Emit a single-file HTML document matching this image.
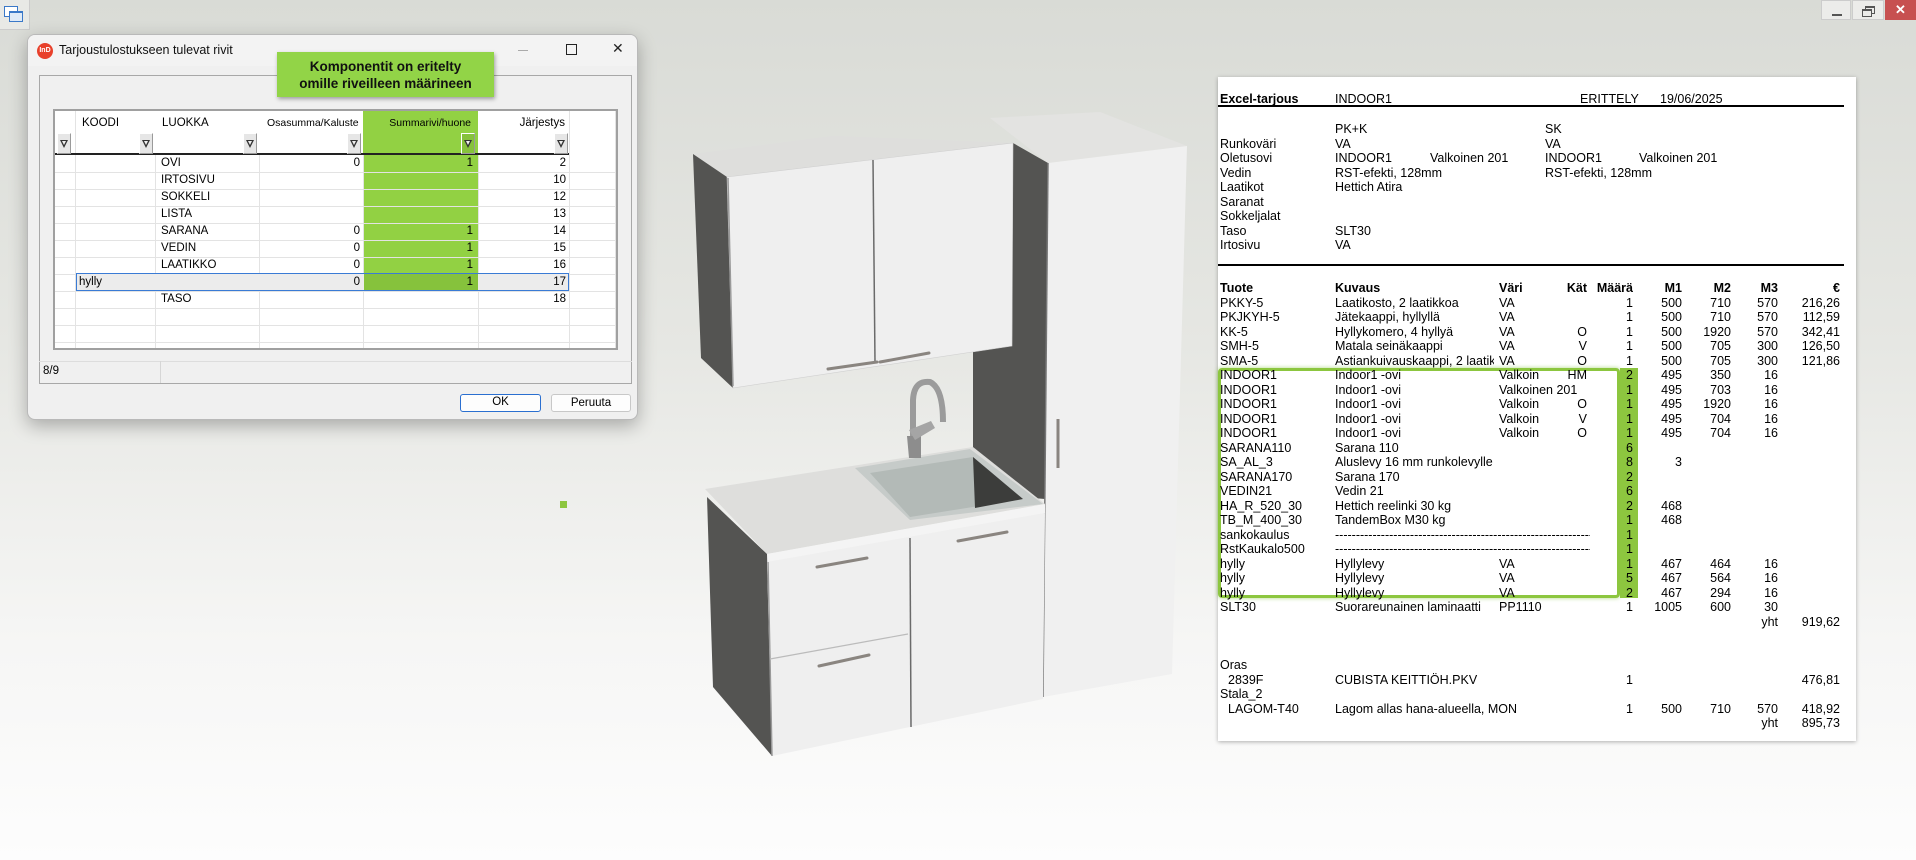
<!DOCTYPE html>
<html><head><meta charset="utf-8"><style>
*{margin:0;padding:0;box-sizing:border-box}
body{width:1916px;height:860px;overflow:hidden;position:relative;font-family:"Liberation Sans",sans-serif;background:linear-gradient(#d9dbd6 0%,#e6e7e3 40%,#f6f6f5 75%,#fdfdfd 100%)}
.abs{position:absolute}
#dlg{left:27px;top:34px;width:611px;height:386px;background:#f0f0f0;border:1px solid #b9b9b9;border-radius:8px;box-shadow:0 6px 18px rgba(0,0,0,.28);overflow:hidden}
#tb{left:0;top:0;width:611px;height:31px;background:#f3f3f3}
.grid{left:25px;top:74px;width:565px;height:241px;background:#fff;border:2px solid #a0a0a0;overflow:hidden;font-size:11.5px;color:#000}
.gl{position:absolute;background:#e3e3e3}
.cell{position:absolute;height:17px;line-height:17px;white-space:nowrap}
.flt{position:absolute;width:14px;height:21px;top:22px;background:#e6e6e6;border:1px solid #9a9a9a;border-left-color:#fff;border-top-color:#fff}
.flt:after{content:"";position:absolute;left:2px;top:6px;border-left:4px solid transparent;border-right:4px solid transparent;border-top:8px solid #333}
.flt:before{content:"";position:absolute;left:4px;top:7px;border-left:2px solid transparent;border-right:2px solid transparent;border-top:4px solid #eee;z-index:1}
#paper{left:1218px;top:77px;width:638px;height:664px;background:#fff;box-shadow:0 1px 4px rgba(0,0,0,.3);font-size:12.5px;color:#000}
#paper div{position:absolute;left:0;width:638px;height:14px;line-height:14px;white-space:nowrap}
#paper span{position:absolute;top:0}
.c1{left:2px}.c2{left:117px;width:159px;overflow:hidden}.c3{left:281px}
.c4{left:319px;width:50px;text-align:right}.c5{left:370px;width:45px;text-align:right}
.c6{left:420px;width:44px;text-align:right}.c7{left:470px;width:43px;text-align:right}
.c8{left:515px;width:45px;text-align:right}.c9{left:565px;width:57px;text-align:right}
.b{font-weight:bold}
</style></head><body>

<div class="abs" style="left:0;top:0;width:30px;height:30px;background:#e8e9e6;border-right:1px solid #ccc;border-bottom:1px solid #ccc">
<div class="abs" style="left:4px;top:6px;width:14px;height:11px;border:1px solid #3a78c8;background:#fff"></div>
<div class="abs" style="left:9px;top:11px;width:14px;height:11px;border:1px solid #3a78c8;border-top-width:2px;background:#dfeaf7"></div>
</div>
<div class="abs" style="left:1821px;top:0;width:30px;height:20px;background:#ececea;border:1px solid #ccc"><div class="abs" style="left:10px;top:13px;width:10px;height:2px;background:#555"></div></div>
<div class="abs" style="left:1852px;top:0;width:32px;height:20px;background:#ececea;border:1px solid #ccc"><div class="abs" style="left:12px;top:5px;width:10px;height:8px;border:1px solid #555;border-top-width:2px"></div><div class="abs" style="left:9px;top:8px;width:10px;height:8px;border:1px solid #555;border-top-width:2px;background:#ececea"></div></div>
<div class="abs" style="left:1885px;top:0;width:31px;height:20px;background:#c75050;color:#fff;font-size:13px;font-weight:bold;text-align:center;line-height:19px">✕</div>

<svg class="abs" style="left:0;top:0" width="1916" height="860">
<polygon points="990,118 1100,112 1187,146 1048,163" fill="#e3e3e1"/>
<polygon points="693,154 833,136 1013,143 727,177" fill="#dededc"/>
<polygon points="1013,143 1048,163 1045,499 973,493 973,350 1012,346" fill="#545452"/>
<polygon points="693,154 727,177 733,388 701,358" fill="#545452"/>
<polygon points="727,177 1013,143 1012,346 733,388" fill="#efefef" stroke="#d0d0d0" stroke-width="0.6"/>
<line x1="873" y1="160" x2="875" y2="362" stroke="#6a6a6a" stroke-width="1.5"/>
<line x1="728" y1="178" x2="733" y2="386" stroke="#9a9a9a" stroke-width="1.5"/>
<polygon points="1048,163 1187,146 1172,674 1043,697" fill="#f0f0f0"/>
<line x1="1048" y1="163" x2="1043" y2="697" stroke="#777" stroke-width="1.5"/>
<line x1="1058" y1="419" x2="1058" y2="468" stroke="#8a8580" stroke-width="3"/>
<polygon points="705,489 973,447 1045,504 767,554" fill="#dededc"/>
<polygon points="767,554 1045,504 1045,513 767,562" fill="#f4f4f4"/>
<polygon points="707,497 767,554 772,756 713,687" fill="#545452"/>
<polygon points="767,562 1045,513 1043,699 772,756" fill="#efefef"/>
<line x1="768" y1="562" x2="772" y2="756" stroke="#9a9a9a" stroke-width="1.5"/>
<line x1="910" y1="538" x2="911" y2="727" stroke="#6a6a6a" stroke-width="1.5"/>
<line x1="770" y1="659" x2="908" y2="634" stroke="#bbb" stroke-width="1.2"/>
<polygon points="855,468 970,449 1043,504 910,520" fill="#c6cbc9"/>
<polygon points="870,473 973,457 1023,499 910,517" fill="#b3bab7"/>
<polygon points="973,457 1023,499 975,508" fill="#3c3d3b"/>
<g stroke="#8a8580" stroke-width="3" stroke-linecap="round">
<line x1="828" y1="369" x2="877" y2="362"/><line x1="880" y1="362" x2="929" y2="353"/>
<line x1="817" y1="567" x2="867" y2="558"/><line x1="819" y1="666" x2="869" y2="655"/>
<line x1="958" y1="541" x2="1007" y2="532"/></g>
<path d="M913,458 L913,400 Q914,380 930,382 Q943,388 943,422" fill="none" stroke="#9b9b9b" stroke-width="6"/>
<path d="M907,436 L909,458 L921,458 L921,436 Z" fill="#8d8d8d"/>
<path d="M909,430 L931,421 L935,428 L915,440 Z" fill="#a5a5a5"/>
<rect x="560" y="501" width="7" height="7" fill="#8dc63f"/>
</svg>

<div id="dlg" class="abs">
<div id="tb" class="abs"></div>
<div class="abs" style="left:9px;top:8px;width:16px;height:16px;border-radius:50%;background:#e8402b;color:#fff;font-size:7px;font-weight:bold;line-height:16px;text-align:center">InD</div>
<div class="abs" style="left:31px;top:8px;font-size:12.5px;color:#111">Tarjoustulostukseen tulevat rivit</div>
<div class="abs" style="left:490px;top:15px;width:10px;height:1px;background:#aaa"></div>
<div class="abs" style="left:538px;top:9px;width:11px;height:11px;border:1.5px solid #222"></div>
<div class="abs" style="left:584px;top:5px;font-size:14px;color:#222">✕</div>
<div class="abs" style="left:11px;top:40px;width:593px;height:309px;border:1px solid #a8a8a8"></div>

<div class="abs grid">
<div class="gl" style="left:308px;top:0;width:115px;height:180px;background:#92d143"></div>
<div class="gl" style="left:20px;top:0;width:1px;height:237px"></div>
<div class="gl" style="left:100px;top:44px;width:1px;height:193px"></div>
<div class="gl" style="left:204px;top:44px;width:1px;height:193px"></div>
<div class="gl" style="left:308px;top:44px;width:1px;height:193px"></div>
<div class="gl" style="left:423px;top:44px;width:1px;height:193px"></div>
<div class="gl" style="left:514px;top:0;width:1px;height:237px"></div>
<div class="gl" style="left:560px;top:0;width:1px;height:237px"></div>
<div class="gl" style="left:0;top:42px;width:514px;height:2px;background:#222"></div>
<div class="gl" style="left:0;top:61px;width:561px;height:1px"></div>
<div class="gl" style="left:0;top:78px;width:561px;height:1px"></div>
<div class="gl" style="left:0;top:95px;width:561px;height:1px"></div>
<div class="gl" style="left:0;top:112px;width:561px;height:1px"></div>
<div class="gl" style="left:0;top:129px;width:561px;height:1px"></div>
<div class="gl" style="left:0;top:146px;width:561px;height:1px"></div>
<div class="gl" style="left:0;top:163px;width:561px;height:1px"></div>
<div class="gl" style="left:0;top:180px;width:561px;height:1px"></div>
<div class="gl" style="left:0;top:197px;width:561px;height:1px"></div>
<div class="gl" style="left:0;top:214px;width:561px;height:1px"></div>
<div class="gl" style="left:0;top:231px;width:561px;height:1px"></div>
<div class="gl" style="left:21px;top:162px;width:493px;height:18px;background:#ececec;border:1px solid #3a7bd5"></div>
<div class="gl" style="left:309px;top:163px;width:114px;height:16px;background:#86c23c"></div>
<div class="cell" style="left:27px;top:4px">KOODI</div>
<div class="cell" style="left:107px;top:4px">LUOKKA</div>
<div class="cell" style="left:212px;top:4px;font-size:10.5px">Osasumma/Kaluste</div>
<div class="cell" style="left:316px;top:4px;width:100px;text-align:right;font-size:10.5px">Summarivi/huone</div>
<div class="cell" style="left:440px;top:4px;width:70px;text-align:right">Järjestys</div>
<div class="flt" style="left:2px"></div><div class="flt" style="left:84px"></div><div class="flt" style="left:188px"></div><div class="flt" style="left:292px"></div><div class="flt" style="left:406px;background:#86c23c"></div><div class="flt" style="left:499px"></div>
<div class="cell" style="left:106px;top:44px">OVI</div><div class="cell" style="left:210px;top:44px;width:95px;text-align:right">0</div><div class="cell" style="left:310px;top:44px;width:108px;text-align:right">1</div><div class="cell" style="left:430px;top:44px;width:81px;text-align:right">2</div>
<div class="cell" style="left:106px;top:61px">IRTOSIVU</div><div class="cell" style="left:430px;top:61px;width:81px;text-align:right">10</div>
<div class="cell" style="left:106px;top:78px">SOKKELI</div><div class="cell" style="left:430px;top:78px;width:81px;text-align:right">12</div>
<div class="cell" style="left:106px;top:95px">LISTA</div><div class="cell" style="left:430px;top:95px;width:81px;text-align:right">13</div>
<div class="cell" style="left:106px;top:112px">SARANA</div><div class="cell" style="left:210px;top:112px;width:95px;text-align:right">0</div><div class="cell" style="left:310px;top:112px;width:108px;text-align:right">1</div><div class="cell" style="left:430px;top:112px;width:81px;text-align:right">14</div>
<div class="cell" style="left:106px;top:129px">VEDIN</div><div class="cell" style="left:210px;top:129px;width:95px;text-align:right">0</div><div class="cell" style="left:310px;top:129px;width:108px;text-align:right">1</div><div class="cell" style="left:430px;top:129px;width:81px;text-align:right">15</div>
<div class="cell" style="left:106px;top:146px">LAATIKKO</div><div class="cell" style="left:210px;top:146px;width:95px;text-align:right">0</div><div class="cell" style="left:310px;top:146px;width:108px;text-align:right">1</div><div class="cell" style="left:430px;top:146px;width:81px;text-align:right">16</div>
<div class="cell" style="left:24px;top:163px">hylly</div><div class="cell" style="left:210px;top:163px;width:95px;text-align:right">0</div><div class="cell" style="left:310px;top:163px;width:108px;text-align:right">1</div><div class="cell" style="left:430px;top:163px;width:81px;text-align:right">17</div>
<div class="cell" style="left:106px;top:180px">TASO</div><div class="cell" style="left:430px;top:180px;width:81px;text-align:right">18</div>
</div>
<div class="abs" style="left:11px;top:326px;width:593px;height:23px;border-top:1px solid #ddd"></div>
<div class="abs" style="left:132px;top:326px;width:1px;height:22px;background:#d6d6d6"></div>
<div class="abs" style="left:15px;top:330px;font-size:11.5px">8/9</div>
<div class="abs" style="left:432px;top:359px;width:81px;height:18px;border:1.5px solid #2a6fd0;border-radius:3px;background:#fdfdfd;font-size:11.5px;text-align:center;line-height:15px">OK</div>
<div class="abs" style="left:523px;top:359px;width:80px;height:18px;border:1px solid #c8c8c8;border-radius:3px;background:#fdfdfd;font-size:11.5px;text-align:center;line-height:16px">Peruuta</div>
</div>
<div class="abs" style="left:277px;top:52px;width:217px;height:45px;background:#92d447;box-shadow:1px 2px 4px rgba(0,0,0,.35);font-size:13.5px;font-weight:bold;text-align:center;line-height:17px;padding-top:6px;color:#111">Komponentit on eritelty<br>omille riveilleen määrineen</div>

<div id="paper" class="abs">
<div style="top:15px"><span class="c1 b">Excel-tarjous</span><span style="left:117px">INDOOR1</span><span style="left:362px">ERITTELY</span><span style="left:442px">19/06/2025</span></div>
<div style="top:28px;height:2px;width:626px;background:#000"></div>
<div style="top:45px"><span style="left:117px">PK+K</span><span style="left:327px">SK</span></div>
<div style="top:59.5px"><span class="c1">Runkoväri</span><span style="left:117px">VA</span><span style="left:327px">VA</span></div>
<div style="top:74px"><span class="c1">Oletusovi</span><span style="left:117px">INDOOR1</span><span style="left:212px">Valkoinen 201</span><span style="left:327px">INDOOR1</span><span style="left:421px">Valkoinen 201</span></div>
<div style="top:88.5px"><span class="c1">Vedin</span><span style="left:117px">RST-efekti, 128mm</span><span style="left:327px">RST-efekti, 128mm</span></div>
<div style="top:103px"><span class="c1">Laatikot</span><span style="left:117px">Hettich Atira</span></div>
<div style="top:117.5px"><span class="c1">Saranat</span></div>
<div style="top:132px"><span class="c1">Sokkeljalat</span></div>
<div style="top:146.5px"><span class="c1">Taso</span><span style="left:117px">SLT30</span></div>
<div style="top:161px"><span class="c1">Irtosivu</span><span style="left:117px">VA</span></div>
<div style="top:187px;height:2px;width:626px;background:#000"></div>

<div style="left:0;top:291px;width:402px;height:230px;border:3px solid #8cc63f;border-radius:4px;box-shadow:0 0 4px rgba(120,190,50,.6)"></div>
<div style="left:402px;top:291px;width:18px;height:230px;background:#8dc63f"></div>

<div style="top:204px" class="b"><span class="c1">Tuote</span><span class="c2">Kuvaus</span><span class="c3">Väri</span><span class="c4">Kät</span><span class="c5">Määrä</span><span class="c6">M1</span><span class="c7">M2</span><span class="c8">M3</span><span class="c9">€</span></div>
<div style="top:218.5px"><span class="c1">PKKY-5</span><span class="c2">Laatikosto, 2 laatikkoa</span><span class="c3">VA</span><span class="c5">1</span><span class="c6">500</span><span class="c7">710</span><span class="c8">570</span><span class="c9">216,26</span></div>
<div style="top:233px"><span class="c1">PKJKYH-5</span><span class="c2">Jätekaappi, hyllyllä</span><span class="c3">VA</span><span class="c5">1</span><span class="c6">500</span><span class="c7">710</span><span class="c8">570</span><span class="c9">112,59</span></div>
<div style="top:247.5px"><span class="c1">KK-5</span><span class="c2">Hyllykomero, 4 hyllyä</span><span class="c3">VA</span><span class="c4">O</span><span class="c5">1</span><span class="c6">500</span><span class="c7">1920</span><span class="c8">570</span><span class="c9">342,41</span></div>
<div style="top:262px"><span class="c1">SMH-5</span><span class="c2">Matala seinäkaappi</span><span class="c3">VA</span><span class="c4">V</span><span class="c5">1</span><span class="c6">500</span><span class="c7">705</span><span class="c8">300</span><span class="c9">126,50</span></div>
<div style="top:276.5px"><span class="c1">SMA-5</span><span class="c2">Astiankuivauskaappi, 2 laatikkoa</span><span class="c3">VA</span><span class="c4">O</span><span class="c5">1</span><span class="c6">500</span><span class="c7">705</span><span class="c8">300</span><span class="c9">121,86</span></div>
<div style="top:291px"><span class="c1">INDOOR1</span><span class="c2">Indoor1 -ovi</span><span class="c3">Valkoin</span><span class="c4">HM</span><span class="c5">2</span><span class="c6">495</span><span class="c7">350</span><span class="c8">16</span></div>
<div style="top:305.5px"><span class="c1">INDOOR1</span><span class="c2">Indoor1 -ovi</span><span class="c3">Valkoinen 201</span><span class="c5">1</span><span class="c6">495</span><span class="c7">703</span><span class="c8">16</span></div>
<div style="top:320px"><span class="c1">INDOOR1</span><span class="c2">Indoor1 -ovi</span><span class="c3">Valkoin</span><span class="c4">O</span><span class="c5">1</span><span class="c6">495</span><span class="c7">1920</span><span class="c8">16</span></div>
<div style="top:334.5px"><span class="c1">INDOOR1</span><span class="c2">Indoor1 -ovi</span><span class="c3">Valkoin</span><span class="c4">V</span><span class="c5">1</span><span class="c6">495</span><span class="c7">704</span><span class="c8">16</span></div>
<div style="top:349px"><span class="c1">INDOOR1</span><span class="c2">Indoor1 -ovi</span><span class="c3">Valkoin</span><span class="c4">O</span><span class="c5">1</span><span class="c6">495</span><span class="c7">704</span><span class="c8">16</span></div>
<div style="top:363.5px"><span class="c1">SARANA110</span><span class="c2">Sarana 110</span><span class="c5">6</span></div>
<div style="top:378px"><span class="c1">SA_AL_3</span><span style="left:117px">Aluslevy 16 mm runkolevylle</span><span class="c5">8</span><span class="c6">3</span></div>
<div style="top:392.5px"><span class="c1">SARANA170</span><span class="c2">Sarana 170</span><span class="c5">2</span></div>
<div style="top:407px"><span class="c1">VEDIN21</span><span class="c2">Vedin 21</span><span class="c5">6</span></div>
<div style="top:421.5px"><span class="c1">HA_R_520_30</span><span class="c2">Hettich reelinki 30 kg</span><span class="c5">2</span><span class="c6">468</span></div>
<div style="top:436px"><span class="c1">TB_M_400_30</span><span class="c2">TandemBox M30 kg</span><span class="c5">1</span><span class="c6">468</span></div>
<div style="top:450.5px"><span class="c1">sankokaulus</span><span style="left:117px;width:255px;overflow:hidden">------------------------------------------------------------------</span><span class="c5">1</span></div>
<div style="top:465px"><span class="c1">RstKaukalo500</span><span style="left:117px;width:255px;overflow:hidden">------------------------------------------------------------------</span><span class="c5">1</span></div>
<div style="top:479.5px"><span class="c1">hylly</span><span class="c2">Hyllylevy</span><span class="c3">VA</span><span class="c5">1</span><span class="c6">467</span><span class="c7">464</span><span class="c8">16</span></div>
<div style="top:494px"><span class="c1">hylly</span><span class="c2">Hyllylevy</span><span class="c3">VA</span><span class="c5">5</span><span class="c6">467</span><span class="c7">564</span><span class="c8">16</span></div>
<div style="top:508.5px"><span class="c1">hylly</span><span class="c2">Hyllylevy</span><span class="c3">VA</span><span class="c5">2</span><span class="c6">467</span><span class="c7">294</span><span class="c8">16</span></div>
<div style="top:523px"><span class="c1">SLT30</span><span class="c2">Suorareunainen laminaatti</span><span class="c3">PP1110</span><span class="c5">1</span><span class="c6">1005</span><span class="c7">600</span><span class="c8">30</span></div>
<div style="top:537.5px"><span class="c8">yht</span><span class="c9">919,62</span></div>
<div style="top:581px"><span class="c1">Oras</span></div>
<div style="top:595.5px"><span style="left:10px">2839F</span><span class="c2">CUBISTA KEITTIÖH.PKV</span><span class="c5">1</span><span class="c9">476,81</span></div>
<div style="top:610px"><span class="c1">Stala_2</span></div>
<div style="top:624.5px"><span style="left:10px">LAGOM-T40</span><span style="left:117px">Lagom allas hana-alueella, MON</span><span class="c5">1</span><span class="c6">500</span><span class="c7">710</span><span class="c8">570</span><span class="c9">418,92</span></div>
<div style="top:639px"><span class="c8">yht</span><span class="c9">895,73</span></div>
</div>
</body></html>
